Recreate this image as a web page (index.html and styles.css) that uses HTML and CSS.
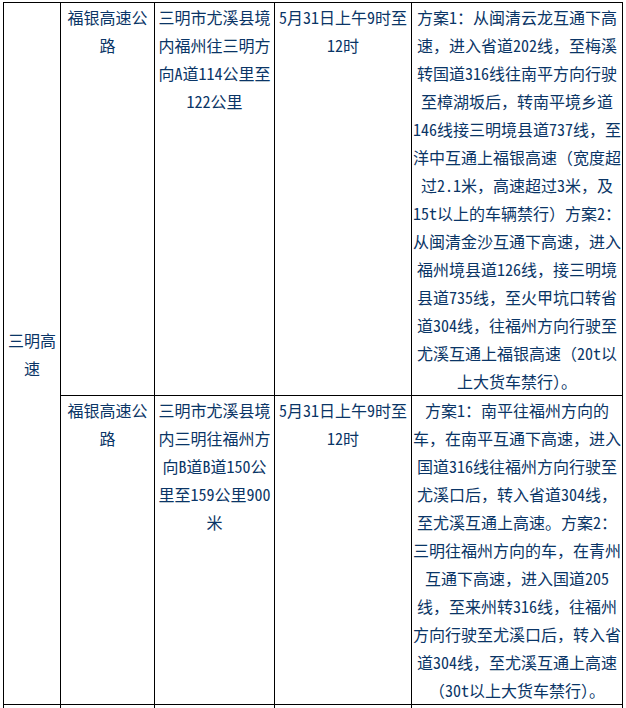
FILE: index.html
```html
<!DOCTYPE html>
<html lang="zh-CN">
<head>
<meta charset="utf-8">
<title>交通管制</title>
<link rel="stylesheet" href="styles.css">
</head>
<body>
<table class="grid">
  <colgroup>
    <col class="c1"><col class="c2"><col class="c3"><col class="c4"><col class="c5">
  </colgroup>
  <tbody>
    <tr class="r1">
      <td class="area" rowspan="2">三明高<br>速</td>
      <td>福银高速公<br>路</td>
      <td>三明市尤溪县境<br>内福州往三明方<br>向<span class="n">A</span>道<span class="n">114</span>公里至<br><span class="n">122</span>公里</td>
      <td><span class="n">5</span>月<span class="n">31</span>日上午<span class="n">9</span>时至<br><span class="n">12</span>时</td>
      <td class="plan">方案<span class="n">1</span>：从闽清云龙互通下高<br>速，进入省道<span class="n">202</span>线，至梅溪<br>转国道<span class="n">316</span>线往南平方向行驶<br>至樟湖坂后，转南平境乡道<br><span class="n">146</span>线接三明境县道<span class="n">737</span>线，至<br>洋中互通上福银高速（宽度超<br>过<span class="n">2.1</span>米，高速超过<span class="n">3</span>米，及<br><span class="n">15t</span>以上的车辆禁行）方案<span class="n">2</span>：<br>从闽清金沙互通下高速，进入<br>福州境县道<span class="n">126</span>线，接三明境<br>县道<span class="n">735</span>线，至火甲坑口转省<br>道<span class="n">304</span>线，往福州方向行驶至<br>尤溪互通上福银高速（<span class="n">20t</span>以<br>上大货车禁行）。</td>
    </tr>
    <tr class="r2">
      <td>福银高速公<br>路</td>
      <td>三明市尤溪县境<br>内三明往福州方<br>向<span class="n">B</span>道<span class="n">B</span>道<span class="n">150</span>公<br>里至<span class="n">159</span>公里<span class="n">900</span><br>米</td>
      <td><span class="n">5</span>月<span class="n">31</span>日上午<span class="n">9</span>时至<br><span class="n">12</span>时</td>
      <td class="plan">方案<span class="n">1</span>：南平往福州方向的<br>车，在南平互通下高速，进入<br>国道<span class="n">316</span>线往福州方向行驶至<br>尤溪口后，转入省道<span class="n">304</span>线，<br>至尤溪互通上高速。方案<span class="n">2</span>：<br>三明往福州方向的车，在青州<br>互通下高速，进入国道<span class="n">205</span><br>线，至来州转<span class="n">316</span>线，往福州<br>方向行驶至尤溪口后，转入省<br>道<span class="n">304</span>线，至尤溪互通上高速<br>（<span class="n">30t</span>以上大货车禁行）。</td>
    </tr>
    <tr class="r3">
      <td></td><td></td><td></td><td></td><td></td>
    </tr>
  </tbody>
</table>
</body>
</html>
```

FILE: styles.css
```css
html, body {
  margin: 0;
  padding: 0;
  background: #ffffff;
  overflow: hidden;
}

.grid {
  margin: 2px 0 0 3px;
  border-collapse: collapse;
  table-layout: fixed;
  width: 620px;
  font-family: "Noto Sans CJK SC", "Noto Sans", sans-serif;
  font-size: 16px;
  line-height: 28px;
  color: #0a3566;
}

.c1 { width: 57px; }
.c2 { width: 94px; }
.c3 { width: 120px; }
.c4 { width: 137px; }
.c5 { width: 211px; }

.grid td {
  border: 1px solid #000000;
  padding: 0 1px;
  vertical-align: top;
  text-align: center;
  white-space: nowrap;
  overflow: hidden;
}

.grid td.area {
  vertical-align: middle;
}

.n {
  font-feature-settings: "hwid" 1;
}

.r3 td {
  height: 40px;
}
```
